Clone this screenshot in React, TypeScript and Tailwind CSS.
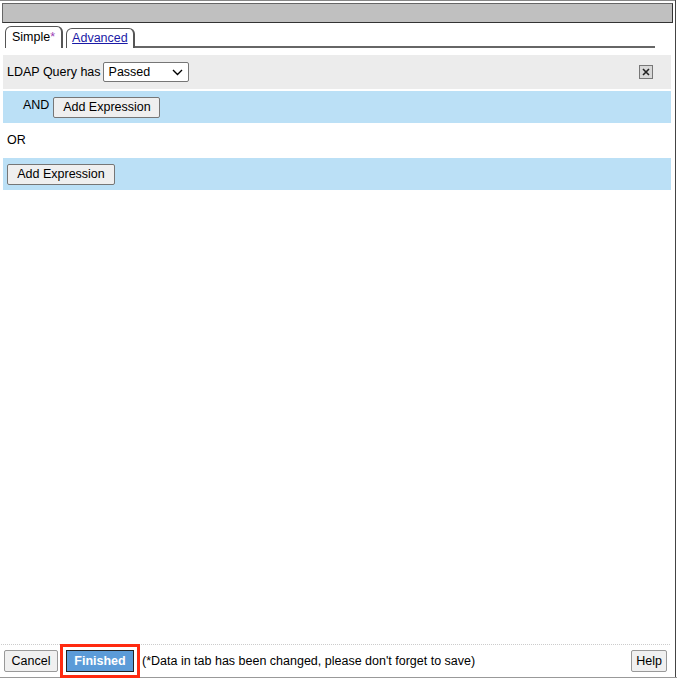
export default function App() {
  return (
    <div
      className="relative w-[677px] h-[678px] bg-white text-[12.5px] text-black overflow-hidden"
      style={{ fontFamily: "Tahoma, 'Liberation Sans', Arial, sans-serif" }}
    >
      <div className="flex flex-col h-[677px] w-[676px] border-r border-[#444]">
        {/* title bar */}
        <div className="h-[3px] border-t border-[#888]" />
        <div className="mx-[2px] mr-[2px] h-[20px] bg-[#c0c0c0] border border-[#666] border-r-[#333] border-b-[#333]" />

        {/* tabs */}
        <div className="flex items-end h-[25px] pl-[5px] pr-[20px]">
          <div className="h-[22px] px-[6px] flex items-center rounded-t-[6px] border border-b-0 border-[#555] border-r-2 bg-white relative z-10">
            Simple<span className="text-[#9b3fb5]">*</span>
          </div>
          <div className="ml-[3px] h-[20px] px-[5px] flex items-center rounded-t-[6px] border border-b-0 border-[#555] border-r-2 bg-white">
            <span className="text-[#1a1aa6] underline">Advanced</span>
          </div>
          <div className="flex-1 h-[2px] bg-[#666]" />
        </div>

        {/* content */}
        <div className="flex-1 flex flex-col pl-[3px] pr-[4px] pt-[7px]">
          <div className="h-[34px] bg-[#ececec] flex items-center pl-[4px] pr-[18px]">
            <span>LDAP Query has</span>
            <div className="ml-[2px] w-[86px] h-[20px] border border-[#767676] rounded-[2px] bg-white flex items-center justify-between px-[5px]">
              <span>Passed</span>
              <svg width="11" height="7" viewBox="0 0 11 7">
                <path d="M1 1 L5.5 5.5 L10 1" stroke="#000" strokeWidth="1.4" fill="none" />
              </svg>
            </div>
            <div className="ml-auto w-[14px] h-[14px] border border-[#777] bg-[#d8d8d8] flex items-center justify-center">
              <svg width="8" height="8" viewBox="0 0 8 8">
                <path d="M1 1 L7 7 M7 1 L1 7" stroke="#222" strokeWidth="1.6" />
              </svg>
            </div>
          </div>
          <div className="mt-[2px] h-[32px] bg-[#bbe0f6] flex items-center pl-[20px]">
            <span className="-mt-[4px]">AND</span>
            <button className="ml-[4px] h-[21px] w-[107px] border border-[#767676] rounded-[2px] bg-[#efefef] leading-none">
              Add Expression
            </button>
          </div>
          <div className="h-[35px] flex items-center pl-[4px]">OR</div>
          <div className="h-[32px] bg-[#bbe0f6] flex items-center pl-[4px]">
            <button className="h-[21px] w-[108px] border border-[#767676] rounded-[2px] bg-[#efefef] leading-none">
              Add Expression
            </button>
          </div>
        </div>

        {/* footer */}
        <div className="border-t border-dotted border-[#ccc] mx-[1px] mr-[5px] h-[33px] flex items-center pl-[3px] pr-[3px]">
          <button className="h-[22px] w-[54px] border border-[#999] rounded-[2px] bg-[#f0f0f0] leading-none">
            Cancel
          </button>
          <div className="ml-[2px] p-[3px] bg-[#ff2a10]">
            <div className="p-[3px] bg-white">
              <button className="h-[22px] w-[68px] border border-[#222] bg-[#5b9bd8] text-white font-bold leading-none">
                Finished
              </button>
            </div>
          </div>
          <span className="ml-[2px]">(*Data in tab has been changed, please don't forget to save)</span>
          <button className="ml-auto h-[22px] px-[4px] border border-[#999] rounded-[2px] bg-[#f0f0f0] leading-none">
            Help
          </button>
        </div>
      </div>
      <div className="h-[1px] bg-[#999]" />
    </div>
  );
}
